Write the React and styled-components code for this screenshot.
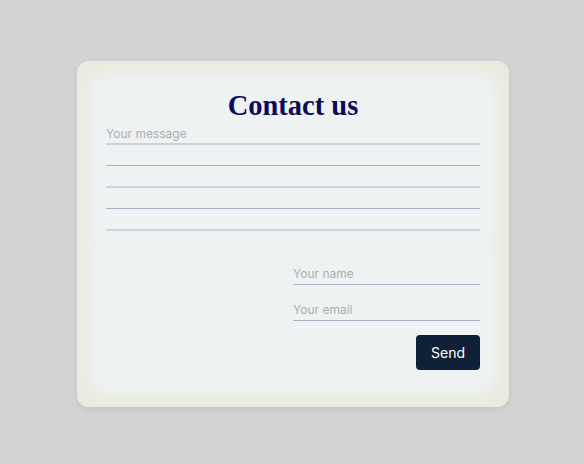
import styled, { createGlobalStyle } from 'styled-components'

const GlobalStyle = createGlobalStyle`
  html, body {
    margin: 0;
    padding: 0;
    background: #d3d3d3;
    font-family: Inter, "Noto Sans", sans-serif;
  }
  * {
    box-sizing: border-box;
  }
`

function App() {
  return (
    <>
      <GlobalStyle />
      <Page>
        <Card>
          <MessageSection>
            <Title>Contact us</Title>
            <MessageArea rows={5} placeholder="Your message" />
          </MessageSection>
          <DetailsSection>
            <Field type="text" placeholder="Your name" />
            <Field type="email" placeholder="Your email" />
            <SendButton>Send</SendButton>
          </DetailsSection>
        </Card>
      </Page>
    </>
  )
}

export default App

const Page = styled.main`
  display: flex;
  justify-content: center;
  padding: 61px 0 0 2px;
  min-height: 464px;
`

const Card = styled.form`
  width: 432px;
  height: 346px;
  padding: 24px 20px 22px;
  border-radius: 12px;
  background: #eef2f3;
  box-shadow: inset 0 0 24px 10px #e9e9d9, 0 2px 6px rgba(0, 0, 0, 0.08);
  display: flex;
  flex-direction: column;
  gap: 10px;
`

const Section = styled.div`
  background: #eef2f3;
  border-radius: 10px;
  box-shadow: 0 0 8px 3px #eef2f3;
  padding: 0 9px;
`

const MessageSection = styled(Section)`
  padding-top: 4px;
  padding-bottom: 9px;
`

const DetailsSection = styled(Section)`
  flex: 1;
  display: flex;
  flex-direction: column;
  align-items: flex-end;
  gap: 14px;
  padding-top: 13px;
  padding-bottom: 15px;
`

const Title = styled.h1`
  margin: 0;
  font-family: "Liberation Serif", "Times New Roman", serif;
  font-size: 28.5px;
  font-weight: 700;
  line-height: 34px;
  text-align: center;
  color: #0b0b5c;
`

const MessageArea = styled.textarea`
  display: block;
  width: 100%;
  height: 108px;
  margin: 0;
  padding: 0;
  border: none;
  outline: none;
  resize: none;
  overflow: hidden;
  font-family: Inter, "Noto Sans", sans-serif;
  font-size: 12px;
  line-height: 21.5px;
  color: #333;
  background-color: transparent;
  background-image: linear-gradient(
    to bottom,
    transparent 20.5px,
    #a4afbf 20.5px,
    #a4afbf 21.5px
  );
  background-size: 100% 21.5px;

  &::placeholder {
    color: #aaaeb2;
  }
`

const Field = styled.input`
  width: 50%;
  height: 22px;
  margin: 0;
  padding: 0;
  border: none;
  border-bottom: 1px solid #a4afbf;
  outline: none;
  background: transparent;
  font-family: Inter, "Noto Sans", sans-serif;
  font-size: 12px;
  color: #333;

  &::placeholder {
    color: #aaaeb2;
  }
`

const SendButton = styled.button`
  width: 64px;
  height: 35px;
  border: none;
  border-radius: 4px;
  background: #0f2139;
  color: #ffffff;
  font-family: Inter, "Noto Sans", sans-serif;
  font-size: 14px;
  cursor: pointer;
`
